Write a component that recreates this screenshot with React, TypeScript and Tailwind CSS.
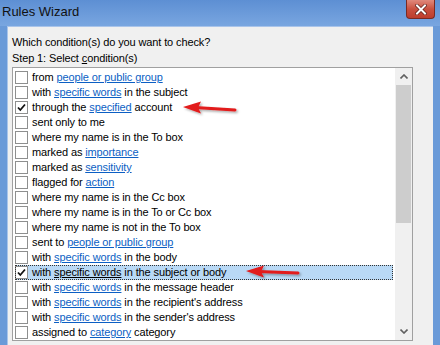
import React from 'react';

type Row = {
  before: string;
  link?: string;
  after?: string;
  checked?: boolean;
  selected?: boolean;
};

const rows: Row[] = [
  { before: 'from ', link: 'people or public group' },
  { before: 'with ', link: 'specific words', after: ' in the subject' },
  { before: 'through the ', link: 'specified', after: ' account', checked: true },
  { before: 'sent only to me' },
  { before: 'where my name is in the To box' },
  { before: 'marked as ', link: 'importance' },
  { before: 'marked as ', link: 'sensitivity' },
  { before: 'flagged for ', link: 'action' },
  { before: 'where my name is in the Cc box' },
  { before: 'where my name is in the To or Cc box' },
  { before: 'where my name is not in the To box' },
  { before: 'sent to ', link: 'people or public group' },
  { before: 'with ', link: 'specific words', after: ' in the body' },
  { before: 'with ', link: 'specific words', after: ' in the subject or body', checked: true, selected: true },
  { before: 'with ', link: 'specific words', after: ' in the message header' },
  { before: 'with ', link: 'specific words', after: " in the recipient's address" },
  { before: 'with ', link: 'specific words', after: " in the sender's address" },
  { before: 'assigned to ', link: 'category', after: ' category' },
];

const CheckBox: React.FC<{ checked?: boolean }> = ({ checked }) => (
  <div className="w-[13px] h-[13px] shrink-0 border border-[#8e8f8f] bg-white flex items-center justify-center">
    {checked && (
      <svg width="9" height="9" viewBox="0 0 9 9">
        <path d="M1 4.5 L3.3 7 L8 1.5" fill="none" stroke="#111" strokeWidth="1.8" />
      </svg>
    )}
  </div>
);

const ConditionRow: React.FC<{ row: Row }> = ({ row }) => (
  <div className="h-[15px] flex items-center pl-[2px] pr-[2px]">
    <div
      className={
        row.selected
          ? 'flex-1 h-[15px] flex items-center gap-[4px] bg-[#b9d9f5] outline-1 outline-dotted outline-[#333] -outline-offset-1'
          : 'flex-1 h-[15px] flex items-center gap-[4px]'
      }
    >
      <CheckBox checked={row.checked} />
      <span className="whitespace-pre text-black leading-[15px] tracking-[-0.12px]">
        {row.before}
        {row.link && (
          <span className={row.selected ? 'underline text-black' : 'underline text-[#0c5fc4]'}>{row.link}</span>
        )}
        {row.after}
      </span>
    </div>
  </div>
);

const Arrow: React.FC<{ tipX: number; tipY: number; tailX: number; tailY: number }> = ({ tipX, tipY, tailX, tailY }) => (
  <g filter="url(#shadow)">
    <line x1={tipX + 12} y1={tipY + 0.6} x2={tailX} y2={tailY} stroke="#e21b1b" strokeWidth="3" strokeLinecap="round" />
    <polygon points={`${tipX},${tipY} ${tipX + 18},${tipY - 5.5} ${tipX + 15},${tipY + 0.8} ${tipX + 18},${tipY + 6.5}`} fill="#e21b1b" />
  </g>
);

export default function App() {
  return (
    <div
      className="relative w-[440px] h-[345px] overflow-hidden flex flex-col bg-[#6a9ad8]"
      style={{ fontFamily: '"Liberation Sans", Arial, sans-serif' }}
    >
      {/* title bar */}
      <div className="h-[26px] shrink-0 flex items-start justify-between pl-[2px] pr-[5px] bg-gradient-to-b from-[#5d8fd3] to-[#79a6e0]">
        <div className="mt-[4px] text-[13px] leading-[16px] text-[#111]">Rules Wizard</div>
        <div className="w-[29px] h-[19px] rounded-b-[4px] border border-t-0 border-[#7a2a22] bg-gradient-to-b from-[#e0897c] via-[#c9503f] to-[#bd3d2d] flex items-center justify-center">
          <svg width="12" height="11" viewBox="0 0 12 11">
            <path d="M2 1.5 L10 9.5 M10 1.5 L2 9.5" stroke="#5a1a14" strokeWidth="3.4" strokeLinecap="square" />
            <path d="M2 1.5 L10 9.5 M10 1.5 L2 9.5" stroke="#ffffff" strokeWidth="2" strokeLinecap="square" />
          </svg>
        </div>
      </div>

      {/* dialog body */}
      <div className="flex-1 mx-[7px] bg-[#f0f0f0] border-t border-l border-[#a9c4ea] pt-[7px] pl-[4px] pr-[20px] text-[11px] text-black tracking-[-0.12px]">
        <div className="leading-[16px]">Which condition(s) do you want to check?</div>
        <div className="leading-[16px]">
          Step 1: Select <span className="underline">c</span>ondition(s)
        </div>

        <div className="mt-[1px] h-[274px] w-[401px] border border-[#a0a0a0] bg-white flex tracking-normal">
          <div className="flex-1 pt-[2px] overflow-hidden">
            {rows.map((row, i) => (
              <ConditionRow key={i} row={row} />
            ))}
          </div>

          {/* scrollbar */}
          <div className="w-[17px] shrink-0 bg-[#f0f0f0] flex flex-col">
            <div className="h-[17px] flex items-center justify-center">
              <svg width="8" height="5" viewBox="0 0 8 5">
                <path d="M0.5 4.5 L4 1 L7.5 4.5" fill="none" stroke="#606060" strokeWidth="1.6" />
              </svg>
            </div>
            <div className="h-[138px] mx-[1px] bg-[#cdcdcd]" />
            <div className="flex-1" />
            <div className="h-[17px] flex items-center justify-center">
              <svg width="8" height="5" viewBox="0 0 8 5">
                <path d="M0.5 0.5 L4 4 L7.5 0.5" fill="none" stroke="#606060" strokeWidth="1.6" />
              </svg>
            </div>
          </div>
        </div>
      </div>

      {/* red annotation arrows */}
      <svg className="absolute inset-0 pointer-events-none" width="440" height="345">
        <defs>
          <filter id="shadow" x="-20%" y="-50%" width="140%" height="200%">
            <feDropShadow dx="1.5" dy="1.5" stdDeviation="1.2" floodColor="#000" floodOpacity="0.35" />
          </filter>
        </defs>
        <Arrow tipX={183} tipY={107} tailX={235} tailY={110} />
        <Arrow tipX={246} tipY={271} tailX={298} tailY={273} />
      </svg>
    </div>
  );
}
